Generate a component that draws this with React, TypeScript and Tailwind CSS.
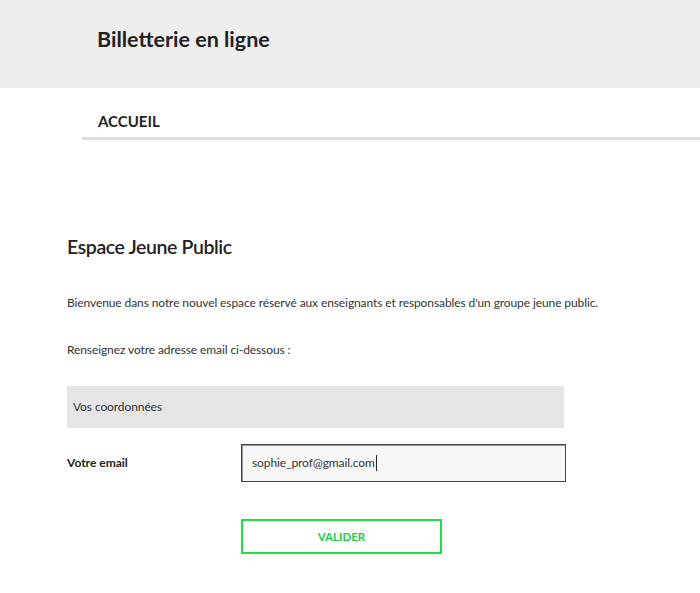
export default function App() {
  return (
    <div className="min-h-[593px] bg-white text-[#333] font-['Lato','Noto_Sans',sans-serif]">
      <header className="h-[88px] bg-[#eeeeee] flex items-center pl-[97px]">
        <h1 className="text-[21.5px] font-bold text-[#222] -mt-[10px]">Billetterie en ligne</h1>
      </header>

      <nav className="ml-[82px] h-[52px] border-b-[3px] border-[#dddddd] flex items-end pb-[5px] pl-[16px]">
        <span className="text-[15px] font-bold text-[#222] uppercase">Accueil</span>
      </nav>

      <main className="px-[67px] pt-[94px]">
        <h2 className="text-[19.5px] font-semibold text-[#222] leading-[26px] tracking-[-0.4px]">Espace Jeune Public</h2>

        <p className="mt-[35px] text-[12px] leading-[16px] text-[#333] tracking-[-0.1px]">
          Bienvenue dans notre nouvel espace réservé aux enseignants et responsables d'un groupe jeune public.
        </p>

        <p className="mt-[31px] text-[12px] leading-[16px] text-[#333] tracking-[-0.1px]">
          Renseignez votre adresse email ci-dessous :
        </p>

        <div className="mt-[28px] w-[497px] h-[42px] bg-[#e5e5e5] flex items-center pl-[6px]">
          <span className="text-[12px] text-[#333] tracking-[-0.1px]">Vos coordonnées</span>
        </div>

        <form className="mt-[16px]" onSubmit={(e) => e.preventDefault()}>
          <div className="flex items-center">
            <label htmlFor="email" className="w-[174px] text-[12px] font-bold text-[#222] -mt-[1px]">
              Votre email
            </label>
            <div className="w-[325px] h-[38px] border border-[#444] bg-[#f7f7f7] flex items-center pl-[10px] shadow-[inset_1px_1px_0_#999]">
              <input
                id="email"
                type="email"
                defaultValue="sophie_prof@gmail.com"
                className="w-[124px] bg-transparent outline-none text-[12px] text-[#333] tracking-[-0.1px]"
                readOnly
              />
              <span className="w-px h-[16px] bg-[#222]" />
            </div>
          </div>

          <div className="mt-[37px] pl-[174px]">
            <button
              type="submit"
              className="w-[201px] h-[35px] border-2 border-[#22dd44] bg-white text-[#22cc44] text-[11.5px] font-bold uppercase"
            >
              Valider
            </button>
          </div>
        </form>
      </main>
    </div>
  );
}
